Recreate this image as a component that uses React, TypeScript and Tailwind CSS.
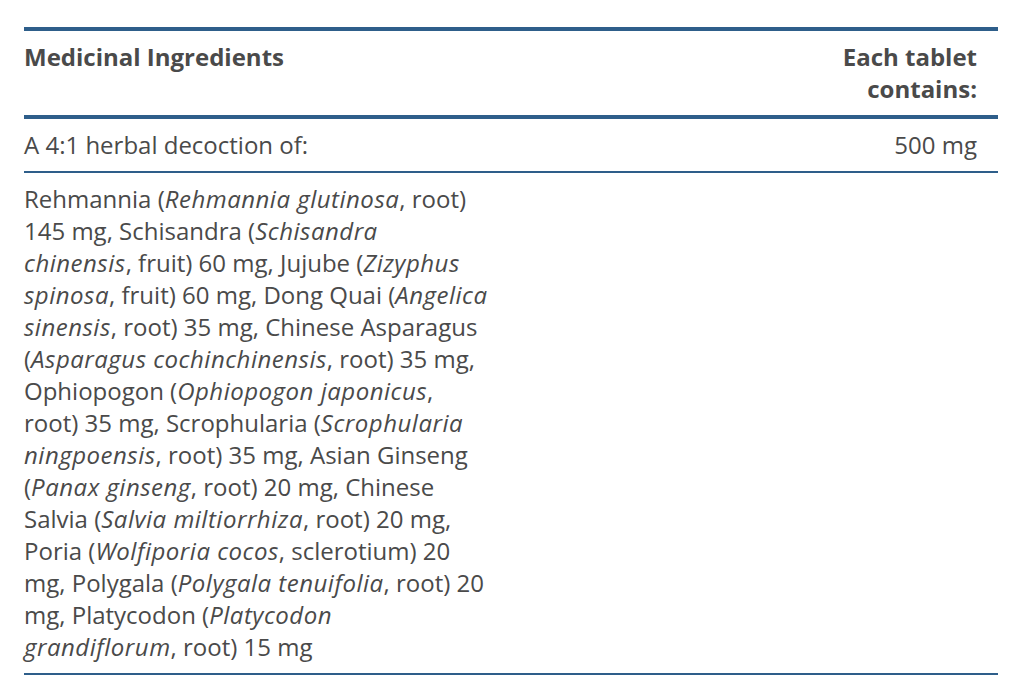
import React from "react";

const I = ({ children }: { children: React.ReactNode }) => (
  <i className="tracking-[0.5px]">{children}</i>
);

export default function App() {
  return (
    <div className="w-[1019px] h-[690px] bg-white pt-[27px] px-[24px]" style={{ fontFamily: '"Open Sans", "Noto Sans", sans-serif' }}>
      <div className="w-[974px] text-[24px] leading-[32px] text-[#4a4a4a]">
        <div className="flex justify-between border-t-4 border-b-4 border-[#2e5e8a] py-[10px] font-bold">
          <div>Medicinal Ingredients</div>
          <div className="w-[170px] text-right pr-[21px]">Each tablet contains:</div>
        </div>
        <div className="flex justify-between border-b-2 border-[#2e5e8a] py-[10px]">
          <div>A 4:1 herbal decoction of:</div>
          <div className="text-right pr-[21px]">500 mg</div>
        </div>
        <div className="flex border-b-2 border-[#2e5e8a] py-[10px]">
          <div className="whitespace-nowrap">
            Rehmannia (<I>Rehmannia glutinosa</I>, root)<br />
            145 mg, Schisandra (<I>Schisandra</I><br />
            <I>chinensis</I>, fruit) 60 mg, Jujube (<I>Zizyphus</I><br />
            <I>spinosa</I>, fruit) 60 mg, Dong Quai (<I>Angelica</I><br />
            <I>sinensis</I>, root) 35 mg, Chinese Asparagus<br />
            (<I>Asparagus cochinchinensis</I>, root) 35 mg,<br />
            Ophiopogon (<I>Ophiopogon japonicus</I>,<br />
            root) 35 mg, Scrophularia (<I>Scrophularia</I><br />
            <I>ningpoensis</I>, root) 35 mg, Asian Ginseng<br />
            (<I>Panax ginseng</I>, root) 20 mg, Chinese<br />
            Salvia (<I>Salvia miltiorrhiza</I>, root) 20 mg,<br />
            Poria (<I>Wolfiporia cocos</I>, sclerotium) 20<br />
            mg, Polygala (<I>Polygala tenuifolia</I>, root) 20<br />
            mg, Platycodon (<I>Platycodon</I><br />
            <I>grandiflorum</I>, root) 15 mg
          </div>
        </div>
      </div>
    </div>
  );
}
